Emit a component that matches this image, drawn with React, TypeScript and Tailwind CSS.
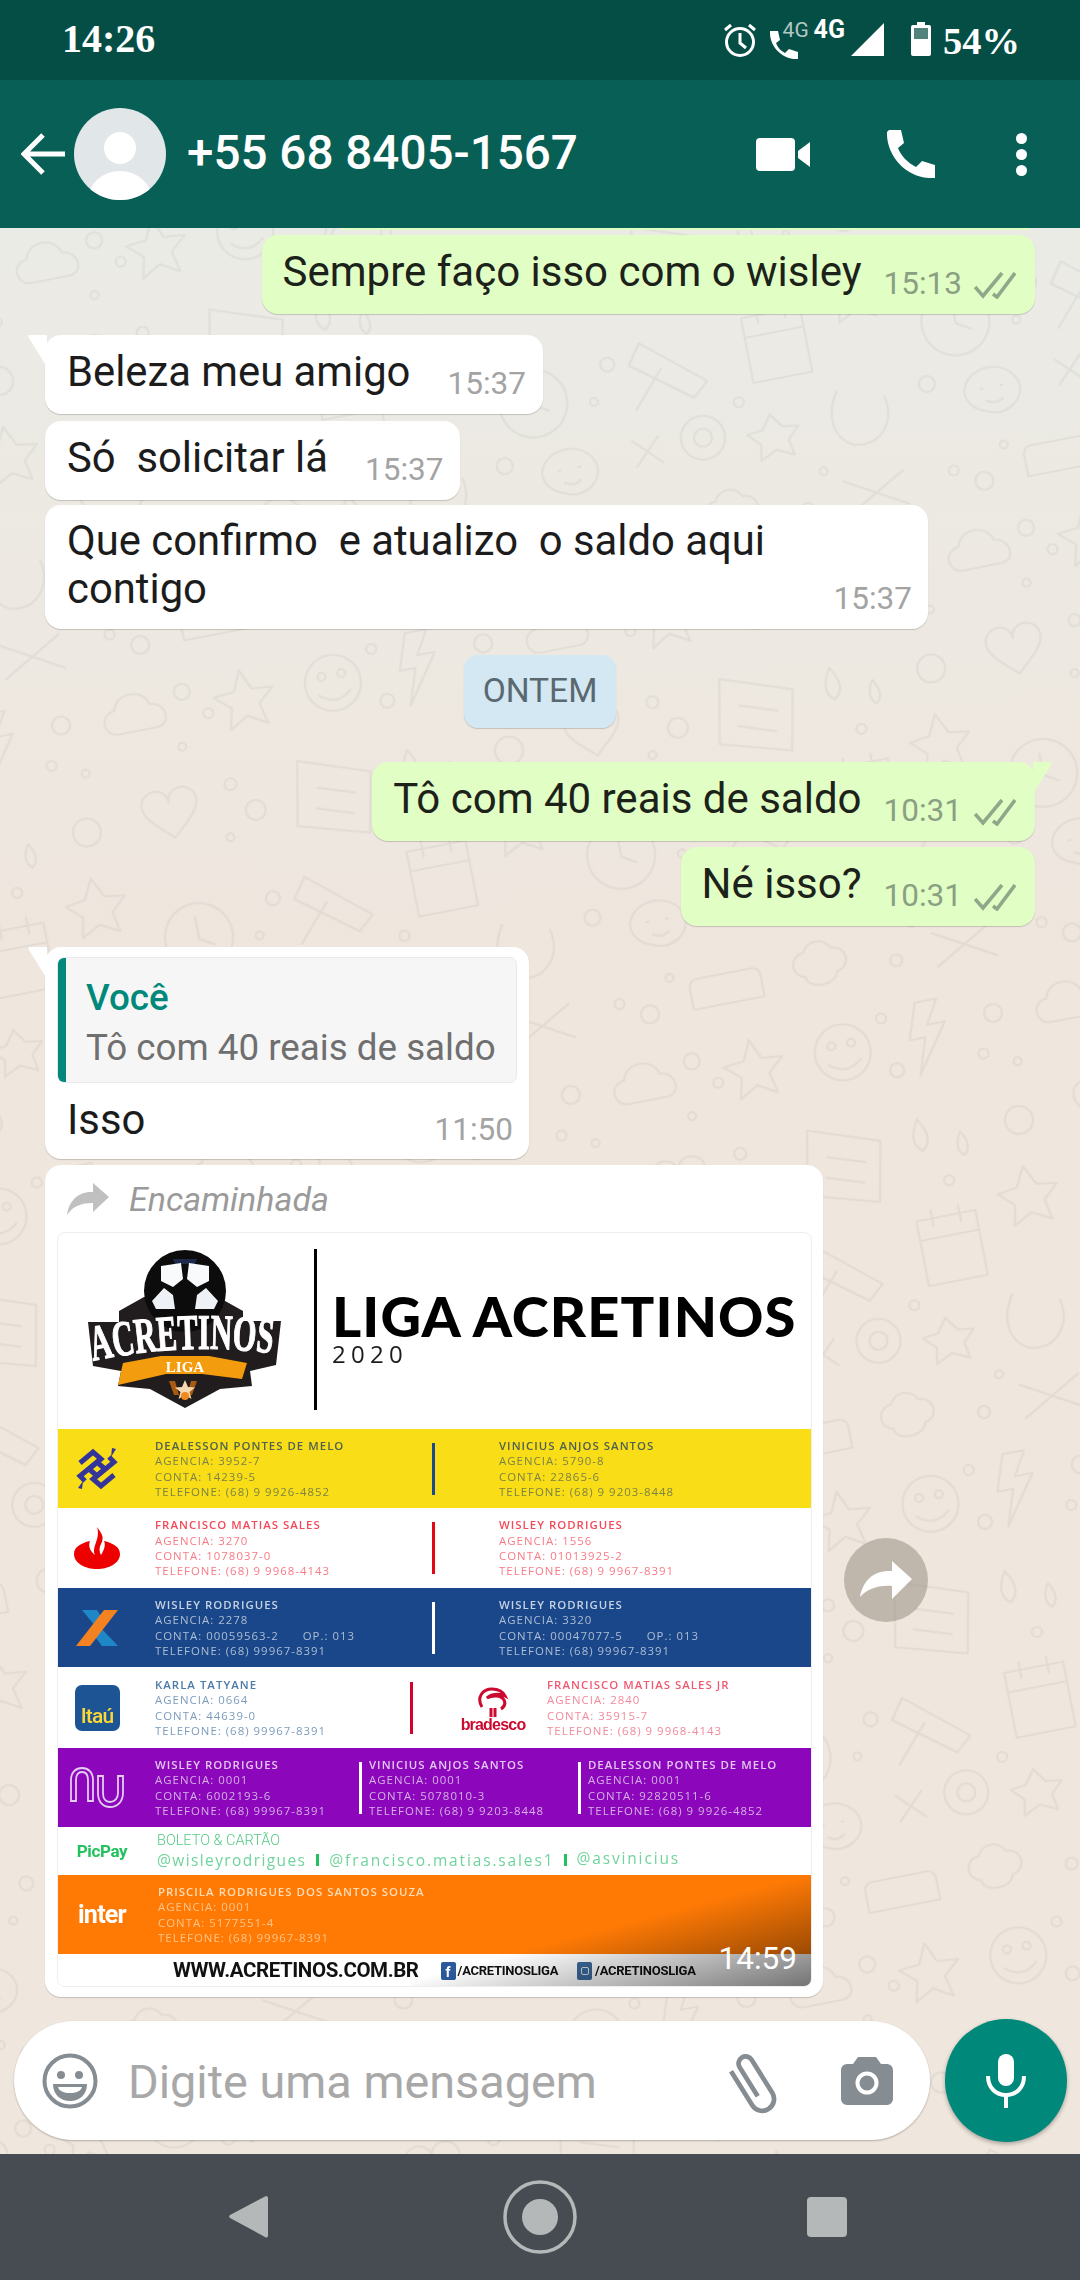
import type { ReactNode } from "react";

const roboto = { fontFamily: "Roboto, sans-serif" };

const Checks = () => (
  <svg width="42" height="27" viewBox="0 0 42 27" fill="none" stroke="#8fa88a" strokeWidth="3.6" className="ml-[12px] mb-[3px]">
    <path d="M1 15 9 24 28 1" />
    <path d="M19 22 23 25 41 1" />
  </svg>
);

const Wallpaper = () => (
  <svg className="absolute inset-0 h-full w-full" xmlns="http://www.w3.org/2000/svg">
    <defs>
      <pattern id="doodles" width="430" height="460" patternUnits="userSpaceOnUse" patternTransform="rotate(-11)">
        <g fill="none" stroke="#000" strokeOpacity="0.048" strokeWidth="2.2" strokeLinejoin="round" strokeLinecap="round">
          <path d="M20 60c-14 0-18-22 0-24 4-18 32-18 36 0 16 0 20 24 2 24z" />
          <circle cx="90" cy="30" r="8" />
          <circle cx="112" cy="56" r="5" />
          <circle cx="80" cy="84" r="4" />
          <path d="M150 20l9 20 21 2-16 14 5 21-19-11-19 11 5-21-16-14 21-2z" />
          <circle cx="240" cy="50" r="28" />
          <circle cx="230" cy="42" r="4" />
          <circle cx="250" cy="42" r="4" />
          <path d="M224 60q16 14 32 0" />
          <circle cx="284" cy="24" r="5" />
          <circle cx="290" cy="78" r="7" />
          <path d="M320 15l-12 36h16l-12 36 34-48h-18l14-24z" />
          <circle cx="395" cy="40" r="9" />
          <circle cx="378" cy="78" r="5" />
          <circle cx="410" cy="92" r="4" />
          <path d="M30 130c8-12 26-8 26 6 0-14 18-18 26-6 8 16-14 30-26 42-12-12-34-26-26-42z" />
          <circle cx="120" cy="130" r="6" />
          <circle cx="140" cy="160" r="10" />
          <circle cx="110" cy="182" r="4" />
          <path d="M190 120l70 24-12 60-70-20z" />
          <path d="M205 150l36 12M200 170l36 12" />
          <path d="M300 130q-14 22 0 32 14-10 0-32zM340 150q-10 16 0 24 10-8 0-24z" />
          <circle cx="400" cy="150" r="14" />
          <circle cx="320" cy="196" r="5" />
          <path d="M395 196l10 20 20 3-15 14 4 20-19-10-19 10 4-20-15-14 20-3z" />
          <path d="M60 240a34 34 0 1 0 .1 0zM60 254v22l14 8" />
          <circle cx="140" cy="250" r="7" />
          <circle cx="120" cy="284" r="4" />
          <path d="M175 235l60 50-16 14-58-44zM160 300l32-36" />
          <path d="M280 230h60v66h-60zM280 250h60M296 222v16M324 222v16" />
          <circle cx="20" cy="330" r="8" />
          <path d="M60 335c14-16 42-12 50 8 6 20-18 34-34 26-20-6-26-22-16-34zM72 345h2M92 345h2M76 358q8 6 16 0" />
          <path d="M150 330l26 26M150 356l26-26" />
          <circle cx="220" cy="340" r="22" />
          <circle cx="220" cy="340" r="9" />
          <circle cx="262" cy="312" r="5" />
          <path d="M290 330l10 14 16 2-12 12 3 16-17-8-17 8 3-16-12-12 16-2z" />
          <path d="M360 320c-14 20-14 46 8 56 26 6 44-16 38-42" />
          <circle cx="30" cy="420" r="5" />
          <circle cx="58" cy="436" r="9" />
          <circle cx="84" cy="404" r="4" />
          <path d="M110 410h56a8 8 0 0 1 8 8v22h-72v-22a8 8 0 0 1 8-8z" />
          <path d="M220 405c-14 0-18 20-2 24 0 14 30 14 32 0 16-2 14-24-2-24-6-12-22-12-28 0z" />
          <circle cx="310" cy="430" r="6" />
          <circle cx="332" cy="396" r="4" />
          <path d="M350 410l60 34M350 444l60-34" />
        </g>
      </pattern>
    </defs>
    <rect width="100%" height="100%" fill="url(#doodles)" />
  </svg>
);

const Tail = ({ side, color }: { side: "left" | "right"; color: string }) =>
  side === "left" ? (
    <svg width="20" height="32" viewBox="0 0 20 32" className="absolute -left-[18px] top-0">
      <path d="M20 0H3Q0 0 2 3L20 32Z" fill={color} />
    </svg>
  ) : (
    <svg width="20" height="32" viewBox="0 0 20 32" className="absolute -right-[18px] top-0">
      <path d="M0 0H17Q20 0 18 3L0 32Z" fill={color} />
    </svg>
  );

const Incoming = ({ text, time, tail, className }: { text: string; time: string; tail?: boolean; className: string }) => (
  <div className={`relative ml-[45px] flex w-fit items-end rounded-[16px] bg-white pl-[22px] pr-[17px] pt-[12px] pb-[12px] shadow-[0_1px_1px_rgba(0,0,0,0.18)] ${className}`}>
    {tail && <Tail side="left" color="#ffffff" />}
    <span className="mb-[5px] whitespace-pre text-[41.8px] leading-[50px] text-[#1c1c1c]">{text}</span>
    <span className="ml-[37px] text-[31.5px] leading-[36px] text-[#a3a3a3]">{time}</span>
  </div>
);

const Outgoing = ({ text, time, tail, className }: { text: string; time: string; tail?: boolean; className: string }) => (
  <div className={`relative ml-auto mr-[45px] flex w-fit items-end rounded-[16px] bg-[#e1fec5] pl-[21px] pr-[19px] pt-[12px] pb-[12px] shadow-[0_1px_1px_rgba(0,0,0,0.18)] ${className}`}>
    {tail && <Tail side="right" color="#e1fec5" />}
    <span className="mb-[5px] whitespace-pre text-[42px] leading-[50px] text-[#1c2219]">{text}</span>
    <span className="ml-[22px] text-[31.5px] leading-[36px] text-[#8b9f83]">{time}</span>
    <Checks />
  </div>
);

const Info = ({ lines, nameCls, cls, className }: { lines: string[]; nameCls: string; cls: string; className?: string }) => (
  <div className={`whitespace-pre text-[11.4px] leading-[15.4px] tracking-[0.09em] ${className ?? ""}`} style={{ fontFamily: "'Open Sans', sans-serif" }}>
    <div className={`font-semibold ${nameCls}`}>{lines[0]}</div>
    {lines.slice(1).map((l) => (
      <div key={l} className={cls}>
        {l}
      </div>
    ))}
  </div>
);

const Band = ({ className, logo, children }: { className: string; logo: ReactNode; children: ReactNode }) => (
  <div className={`flex items-center ${className}`}>
    <div className="flex w-[78px] shrink-0 items-center justify-center">{logo}</div>
    {children}
  </div>
);

const AcretinosLogo = () => (
  <svg width="240" height="180" viewBox="0 0 240 180" className="ml-[3px] mt-[8px] shrink-0">
    <defs>
      <path id="arch" d="M32 120 Q124 100 216 113" />
    </defs>
    <path d="M58 70l25-14h74l25 14v10l38 0-5 44-26 6 2 15-32 3-35 19-35-19-32-3 3-15-28-5-5-44 31 0z" fill="#211c1d" />
    <circle cx="124" cy="50" r="41" fill="#0c0c0c" />
    <path d="M112 18h24l-2 5h-20z" fill="#1d2a4a" />
    <path d="M100 25l20-3 2 16-10 8-12-6zM148 25l-20-3-2 16 10 8 12-6z" fill="#f8fafc" />
    <path d="M103 47l9 7 2 14-19 0-4-8zM145 47l-9 7-2 14 19 0 4-8z" fill="#eef1f5" />
    <text fill="#ffffff" stroke="#ffffff" strokeWidth="1.2" fontFamily="'Liberation Serif', serif" fontWeight="700" fontSize="50">
      <textPath href="#arch" textLength="180" lengthAdjust="spacingAndGlyphs">
        ACRETINOS
      </textPath>
    </text>
    <path d="M62 122l38-7h48l38 7-5 16-40-5h-36l-48 11z" fill="#f39c0d" />
    <text x="124" y="131" textAnchor="middle" fill="#ffffff" fontFamily="'Liberation Serif', serif" fontWeight="700" fontSize="15">
      LIGA
    </text>
    <path d="M108 140h6l4 14h-5zM136 140h-6l-4 14h5z" fill="#a85a10" />
    <path d="M124 139l3 7 7 .5-5.500 4.500 2 7-6.500-4-6.500 4 2-7-5.500-4.500 7-.5z" fill="#f6d9b0" />
    <circle cx="124" cy="155" r="4" fill="#ef8a1e" />
  </svg>
);

const BBLogo = () => (
  <svg width="42" height="42" viewBox="0 0 42 42">
    <g fill="none" stroke="#33359a" strokeWidth="5">
      <path d="M4 15 17 4l8 7-12 10 8 7 17-14-5-5" />
      <path d="M38 27 25 38l-8-7 12-10-8-7L4 28l5 5" />
    </g>
    <path d="M36 0l4 1-5 8zM6 41l-4-1 5-7z" fill="#33359a" />
  </svg>
);

const SantanderLogo = () => (
  <svg width="46" height="42" viewBox="0 0 46 42">
    <path d="M23 0c6 8 7 11 4 17-2 4-2 7 0 11 3-5 5-10 3-14 9 2 16 6 16 13 0 9-11 15-23 15S0 36 0 27c0-7 7-11 16-13-2 5 0 10 5 14-4-8 6-16 2-28z" fill="#ec0000" />
  </svg>
);

const CaixaLogo = () => (
  <svg width="42" height="36" viewBox="0 0 42 36">
    <path d="M6 0h15l7 11-8 6z" fill="#1f86c8" />
    <path d="M24 17l18 19H26l-9-12z" fill="#1f86c8" />
    <path d="M28 0h14L14 36H0z" fill="#f58220" />
  </svg>
);

const ItauLogo = () => (
  <div className="flex h-[46px] w-[45px] items-end justify-center rounded-[7px] bg-[#1c5494] pb-[3px] text-[21px] font-medium leading-[24px] tracking-[-0.04em] text-[#fdd835]">
    Itaú
  </div>
);

const BradescoLogo = () => (
  <div className="flex w-[56px] flex-col items-center text-[#cc092f]">
    <svg width="32" height="30" viewBox="0 0 32 30" fill="none" stroke="#cc092f" strokeWidth="3">
      <path d="M5 20C-1 10 6 2 15 2c6 0 11 3 13 7C22 6 13 7 10 11c5-3 14-3 17 2 2 4 0 7-3 9" />
      <path d="M14 21v9M18 21v9" />
    </svg>
    <span className="text-[16px] font-bold leading-[16px] tracking-[-0.05em]" style={{ fontFamily: "'Liberation Sans', sans-serif" }}>
      bradesco
    </span>
  </div>
);

const NuLogo = () => (
  <svg width="54" height="42" viewBox="0 0 54 42" fill="none" stroke="#e3cdf0" strokeWidth="1.8">
    <path d="M1 34V13C1 5 6 1 12 1s11 4 11 12v21h-5V13c0-5-2-8-6-8s-6 3-6 8v21z" />
    <path d="M28 9v17c0 9 5 14 12 14s13-5 13-14V9h-5v17c0 5-3 9-8 9s-7-4-7-9V9z" />
  </svg>
);

const App = () => {
  return (
    <div className="flex h-[2280px] w-[1080px] flex-col overflow-hidden bg-[#efe6dd]" style={roboto}>
      {/* status bar */}
      <div className="flex h-[80px] shrink-0 items-center bg-[#054e45] pl-[62px] pr-[60px] text-white">
        <span className="mb-[3px] text-[40px] font-bold leading-none" style={{ fontFamily: "'Liberation Serif', serif" }}>
          14:26
        </span>
        <div className="ml-auto flex items-start pt-[2px]">
          <svg width="34" height="36" viewBox="0 0 34 36" fill="none" stroke="#fff" strokeWidth="3" className="mt-[-1px]">
            <circle cx="17" cy="20" r="13.500" />
            <path d="M17 11v10l6 5" />
            <path d="M2 8l6-5M32 8l-6-5" />
          </svg>
          <div className="relative ml-[12px] h-[36px] w-[46px]">
            <svg width="30" height="30" viewBox="0 0 30 30" className="absolute left-0 top-[7px]">
              <path d="M1 1h8l2 9-4 3c2 5 5 8 9 10l4-4 9 3v7C13 30 0 16 1 1z" fill="#fff" />
            </svg>
            <span className="absolute left-[14px] top-[-7px] text-[21px] leading-[28px] text-white/70">4G</span>
          </div>
          <span className="ml-[-1px] mt-[-9px] text-[25px] font-bold leading-[32px]">4G</span>
          <svg width="33" height="33" viewBox="0 0 33 33" className="ml-[6px]">
            <path d="M33 0v33H0z" fill="#fff" />
          </svg>
          <svg width="20" height="34" viewBox="0 0 20 34" className="ml-[27px] mt-[-1px]">
            <path d="M6 0h8v3h4a2 2 0 0 1 2 2v27a2 2 0 0 1-2 2H2a2 2 0 0 1-2-2V5a2 2 0 0 1 2-2h4z" fill="#fff" />
            <path d="M3 6h14v11H3z" fill="#054e45" opacity="0.7" />
          </svg>
          <span className="ml-[12px] mt-[-1px] text-[38.5px] font-bold leading-[38px]" style={{ fontFamily: "'Liberation Serif', serif" }}>
            54%
          </span>
        </div>
      </div>

      {/* header */}
      <div className="relative z-20 flex h-[148px] shrink-0 items-center bg-[#085f55] text-white">
        <svg width="44" height="42" viewBox="0 0 44 42" fill="none" stroke="#fff" strokeWidth="5" className="ml-[21px]">
          <path d="M44 21H3M22 2 3 21l19 19" />
        </svg>
        <svg width="92" height="92" viewBox="0 0 92 92" className="ml-[9px]">
          <clipPath id="avatar">
            <circle cx="46" cy="46" r="46" />
          </clipPath>
          <g clipPath="url(#avatar)">
            <rect width="92" height="92" fill="#e1e6e9" />
            <circle cx="46" cy="40" r="16" fill="#fff" />
            <ellipse cx="46" cy="92" rx="32" ry="29" fill="#fff" />
          </g>
        </svg>
        <span className="ml-[21px] text-[47.6px] font-medium leading-none">+55 68 8405-1567</span>
        <svg width="54" height="33" viewBox="0 0 54 33" className="ml-auto">
          <rect width="39" height="33" rx="4" fill="#fff" />
          <path d="M42 13 54 4v25L42 20z" fill="#fff" />
        </svg>
        <svg width="48" height="48" viewBox="0 0 48 48" className="ml-[77px]">
          <path d="M2 0h12l3 13-6 5c3 8 10 15 18 19l6-6 13 4v13C20 50-1 26 0 2z" fill="#fff" />
        </svg>
        <div className="ml-[81px] mr-[53px] flex flex-col gap-[5px]">
          <div className="h-[11px] w-[11px] rounded-full bg-white" />
          <div className="h-[11px] w-[11px] rounded-full bg-white" />
          <div className="h-[11px] w-[11px] rounded-full bg-white" />
        </div>
      </div>

      {/* chat */}
      <div className="relative flex-1 overflow-hidden bg-linear-to-b from-[#ebebe6] to-[#efe6dd] to-40%">
        <Wallpaper />
        <div className="relative z-10 flex flex-col">
          <div className="ml-[340px] h-[2px] w-[690px] bg-[#e1fec5]" />
          <Outgoing text="Sempre faço isso com o wisley" time="15:13" className="mt-[5px]" />
          <Incoming text="Beleza meu amigo" time="15:37" tail className="mt-[21px]" />
          <Incoming text="Só  solicitar lá" time="15:37" className="mt-[7px]" />
          <div className="ml-[45px] mt-[5px] flex h-[124px] w-[883px] items-end justify-between rounded-[16px] bg-white pl-[22px] pr-[16px] pt-[11px] pb-[12px] shadow-[0_1px_1px_rgba(0,0,0,0.18)]">
            <span className="mb-[4px] whitespace-pre text-[41.8px] leading-[48px] text-[#1c1c1c]">
              {"Que confirmo  e atualizo  o saldo aqui\ncontigo"}
            </span>
            <span className="text-[31.5px] leading-[36px] text-[#a3a3a3]">15:37</span>
          </div>

          <div className="mx-auto mt-[26px] flex h-[73px] w-[152px] items-center justify-center rounded-[14px] bg-[#d4e8f3] text-[33.5px] text-[#5a6871] shadow-[0_1px_1px_rgba(0,0,0,0.18)]">
            ONTEM
          </div>

          <Outgoing text="Tô com 40 reais de saldo" time="10:31" tail className="mt-[34px]" />
          <Outgoing text="Né isso?" time="10:31" className="mt-[6px]" />

          <div className="relative ml-[45px] mt-[21px] h-[212px] w-[484px] rounded-[16px] bg-white px-[12px] pt-[10px] shadow-[0_1px_1px_rgba(0,0,0,0.18)]">
            <Tail side="left" color="#ffffff" />
            <div className="flex h-[126px] overflow-hidden rounded-[7px] border border-[#e9e9e9] bg-[#f6f6f6]">
              <div className="w-[8px] shrink-0 bg-[#00897b]" />
              <div className="pl-[20px] pt-[18px]">
                <div className="text-[36.750px] font-medium leading-[44px] text-[#00897b]">Você</div>
                <div className="mt-[6px] whitespace-pre text-[36.750px] leading-[44px] text-[#6f6f6f]">Tô com 40 reais de saldo</div>
              </div>
            </div>
            <div className="flex items-end justify-between pl-[10px] pr-[4px] pt-[12px]">
              <span className="mb-[3px] text-[41.8px] leading-[50px] text-[#1c1c1c]">Isso</span>
              <span className="text-[31.5px] leading-[36px] text-[#a3a3a3]">11:50</span>
            </div>
          </div>

          <div className="mt-[6px] flex items-center">
            <div className="ml-[45px] h-[832px] w-[778px] rounded-[16px] bg-white px-[12px] shadow-[0_1px_1px_rgba(0,0,0,0.18)]">
              <div className="flex h-[67px] items-center pl-[10px]">
                <svg width="42" height="32" viewBox="0 0 42 32">
                  <path d="M26 0l16 14-16 15v-9C14 20 6 23 0 32c2-14 11-24 26-23z" fill="#c0c0c0" />
                </svg>
                <span className="ml-[20px] text-[34px] italic leading-none text-[#9a9a9a]">Encaminhada</span>
              </div>

              {/* forwarded picture */}
              <div className="relative h-[755px] w-[755px] overflow-hidden rounded-[8px] border border-[#eeeeee] bg-white">
                <div className="blur-[0.4px]">
                  <div className="flex h-[196px] items-start">
                    <AcretinosLogo />
                    <div className="ml-[13px] mt-[16px] h-[161px] w-[3px] shrink-0 bg-black" />
                    <div className="ml-[15px] mt-[54px]">
                      <div className="whitespace-pre text-[56px] font-black leading-[58px] tracking-[0.02em] text-black" style={{ fontFamily: "Lato, sans-serif" }}>
                        LIGA ACRETINOS
                      </div>
                      <div className="mt-[-4px] text-[24px] leading-[26px] tracking-[0.22em] text-[#1c1c1c]" style={{ fontFamily: "'Open Sans', sans-serif" }}>
                        2020
                      </div>
                    </div>
                  </div>

                  <Band className="h-[79px] bg-[#f9dd17]" logo={<BBLogo />}>
                    <Info className="ml-[19px] w-[277px]" nameCls="text-[#4f6152]" cls="text-[#7b8247]" lines={["DEALESSON PONTES DE MELO", "AGENCIA: 3952-7", "CONTA: 14239-5", "TELEFONE: (68) 9 9926-4852"]} />
                    <div className="h-[52px] w-[3px] bg-[#1b4a8a]" />
                    <Info className="ml-[64px]" nameCls="text-[#4f6152]" cls="text-[#7b8247]" lines={["VINICIUS ANJOS SANTOS", "AGENCIA: 5790-8", "CONTA: 22865-6", "TELEFONE: (68) 9 9203-8448"]} />
                  </Band>
                  <Band className="h-[80px] bg-white" logo={<SantanderLogo />}>
                    <Info className="ml-[19px] w-[277px]" nameCls="text-[#f24a5a]" cls="text-[#f87a85]" lines={["FRANCISCO MATIAS SALES", "AGENCIA: 3270", "CONTA: 1078037-0", "TELEFONE: (68) 9 9968-4143"]} />
                    <div className="h-[52px] w-[3px] bg-[#e30613]" />
                    <Info className="ml-[64px]" nameCls="text-[#f24a5a]" cls="text-[#f87a85]" lines={["WISLEY RODRIGUES", "AGENCIA: 1556", "CONTA: 01013925-2", "TELEFONE: (68) 9 9967-8391"]} />
                  </Band>
                  <Band className="h-[79px] bg-[#1a4789]" logo={<CaixaLogo />}>
                    <Info className="ml-[19px] w-[277px]" nameCls="text-[#c6d2e2]" cls="text-[#adbdd3]" lines={["WISLEY RODRIGUES", "AGENCIA: 2278", "CONTA: 00059563-2      OP.: 013", "TELEFONE: (68) 99967-8391"]} />
                    <div className="h-[52px] w-[3px] bg-white" />
                    <Info className="ml-[64px]" nameCls="text-[#c6d2e2]" cls="text-[#adbdd3]" lines={["WISLEY RODRIGUES", "AGENCIA: 3320", "CONTA: 00047077-5      OP.: 013", "TELEFONE: (68) 99967-8391"]} />
                  </Band>
                  <Band className="h-[81px] bg-white" logo={<ItauLogo />}>
                    <Info className="ml-[19px] w-[255px]" nameCls="text-[#4d7ba8]" cls="text-[#7c9cbc]" lines={["KARLA TATYANE", "AGENCIA: 0664", "CONTA: 44639-0", "TELEFONE: (68) 99967-8391"]} />
                    <div className="h-[52px] w-[3px] bg-[#d5002b]" />
                    <div className="ml-[52px] mt-[4px]">
                      <BradescoLogo />
                    </div>
                    <Info className="ml-[26px]" nameCls="text-[#ef5a73]" cls="text-[#f28a9b]" lines={["FRANCISCO MATIAS SALES JR", "AGENCIA: 2840", "CONTA: 35915-7", "TELEFONE: (68) 9 9968-4143"]} />
                  </Band>
                  <Band className="h-[79px] bg-[#8c06bb]" logo={<NuLogo />}>
                    <Info className="ml-[19px] w-[204px]" nameCls="text-[#e2c7ee]" cls="text-[#d5b0e4]" lines={["WISLEY RODRIGUES", "AGENCIA: 0001", "CONTA: 6002193-6", "TELEFONE: (68) 99967-8391"]} />
                    <div className="h-[52px] w-[3px] bg-white" />
                    <Info className="ml-[7px] w-[209px]" nameCls="text-[#e2c7ee]" cls="text-[#d5b0e4]" lines={["VINICIUS ANJOS SANTOS", "AGENCIA: 0001", "CONTA: 5078010-3", "TELEFONE: (68) 9 9203-8448"]} />
                    <div className="h-[52px] w-[3px] bg-white" />
                    <Info className="ml-[7px]" nameCls="text-[#e2c7ee]" cls="text-[#d5b0e4]" lines={["DEALESSON PONTES DE MELO", "AGENCIA: 0001", "CONTA: 92820511-6", "TELEFONE: (68) 9 9926-4852"]} />
                  </Band>
                  <Band className="h-[48px] bg-white" logo={<span className="ml-[10px] text-[17px] font-bold leading-none tracking-[-0.02em] text-[#21c25e]">PicPay</span>}>
                    <div className="ml-[21px] text-[#55c985]" style={{ fontFamily: "'Open Sans', sans-serif" }}>
                      <div className="text-[14.5px] font-light leading-[18px]" style={{ fontFamily: "Roboto, sans-serif" }}>
                        BOLETO &amp; CARTÃO
                      </div>
                      <div className="flex items-center whitespace-pre text-[15.5px] leading-[20px] tracking-[0.09em] text-[#6fd49b]">
                        <span>@wisleyrodrigues</span>
                        <span className="ml-[10px] h-[12px] w-[3px] bg-[#21c25e]" />
                        <span className="ml-[10px] tracking-[0.12em]">@francisco.matias.sales1</span>
                        <span className="ml-[10px] h-[12px] w-[3px] bg-[#21c25e]" />
                        <span className="ml-[9px] mt-[-5px] tracking-[0.12em]">@asvinicius</span>
                      </div>
                    </div>
                  </Band>
                  <Band className="h-[79px] bg-[#ff7a05]" logo={<span className="ml-[10px] text-[25px] font-bold leading-none tracking-[-0.03em] text-white">inter</span>}>
                    <Info className="ml-[22px]" nameCls="text-[#ffdcb5]" cls="text-[#ffc48a]" lines={["PRISCILA RODRIGUES DOS SANTOS SOUZA", "AGENCIA: 0001", "CONTA: 5177551-4", "TELEFONE: (68) 99967-8391"]} />
                  </Band>
                  <div className="flex h-[33px] items-center whitespace-pre bg-white pl-[115px] font-bold text-[#111111]">
                    <span className="text-[20.5px] leading-none tracking-[-0.02em]">WWW.ACRETINOS.COM.BR</span>
                    <span className="ml-[22px] flex h-[18px] w-[15px] items-end justify-center rounded-[2px] bg-[#2a5a9c] text-[14px] leading-[16px] text-white">f</span>
                    <span className="ml-[2px] text-[13px] leading-none tracking-[-0.02em]">/ACRETINOSLIGA</span>
                    <span className="ml-[19px] flex h-[18px] w-[15px] items-center justify-center rounded-[2px] bg-[#3d6a9c]">
                      <span className="h-[8px] w-[8px] rounded-[2px] border border-white/80" />
                    </span>
                    <span className="ml-[3px] text-[13px] leading-none tracking-[-0.02em]">/ACRETINOSLIGA</span>
                  </div>
                </div>
                <div className="absolute bottom-0 right-0 h-[110px] w-[400px] bg-[linear-gradient(165deg,transparent_48%,rgba(0,0,0,0.55))]" />
                <span className="absolute bottom-[9px] right-[14px] text-[31.5px] leading-[36px] text-white">14:59</span>
              </div>
            </div>
            <div className="ml-[21px] mb-[3px] flex h-[84px] w-[84px] items-center justify-center rounded-full bg-[#8f887c]/50">
              <svg width="52" height="38" viewBox="0 0 52 38">
                <path d="M32 0l20 18-20 20V25C17 24 8 28 0 36 3 19 14 9 32 10z" fill="#fff" />
              </svg>
            </div>
          </div>

          {/* composer */}
          <div className="mt-[22px] flex items-center pl-[14px]">
            <div className="flex h-[119px] w-[916px] items-center rounded-full bg-white shadow-[0_1px_2px_rgba(0,0,0,0.25)]">
              <svg width="56" height="56" viewBox="0 0 56 56" className="ml-[28px]">
                <circle cx="28" cy="28" r="25.500" fill="none" stroke="#858d93" strokeWidth="4" />
                <circle cx="19" cy="22" r="4" fill="#858d93" />
                <circle cx="37" cy="22" r="4" fill="#858d93" />
                <path d="M11 31h34c0 11-8 17-17 17S11 42 11 31z" fill="#858d93" />
                <path d="M16 34h24c-1 4-6 6-12 6s-11-2-12-6z" fill="#fff" />
              </svg>
              <span className="ml-[30px] mt-[4px] whitespace-pre text-[46.8px] leading-none text-[#a8a8a8]">Digite uma mensagem</span>
              <svg width="70" height="66" viewBox="0 0 58 56" fill="none" stroke="#858d93" strokeWidth="4" className="ml-auto">
                <path d="M27 42V13a6 6 0 0 1 12 0v33a10 10 0 0 1-20 0V12" transform="rotate(-32 29 28)" />
              </svg>
              <svg width="52" height="48" viewBox="0 0 52 48" className="ml-[55px] mr-[37px]">
                <path d="M17 0h18l5 7h6a6 6 0 0 1 6 6v29a6 6 0 0 1-6 6H6a6 6 0 0 1-6-6V13a6 6 0 0 1 6-6h6z" fill="#858d93" />
                <circle cx="26" cy="26" r="9.500" fill="none" stroke="#fff" strokeWidth="4" />
              </svg>
            </div>
            <div className="ml-[15px] flex h-[123px] w-[122px] items-center justify-center rounded-full bg-[#00897b] shadow-[0_2px_4px_rgba(0,0,0,0.3)]">
              <svg width="40" height="54" viewBox="0 0 40 54">
                <rect x="12" y="0" width="16" height="32" rx="8" fill="#fff" />
                <path d="M2 22c0 12 8 19 18 19s18-7 18-19" fill="none" stroke="#fff" strokeWidth="4" />
                <rect x="18" y="40" width="4" height="14" fill="#fff" />
              </svg>
            </div>
          </div>
        </div>
      </div>

      {/* nav bar */}
      <div className="flex h-[126px] shrink-0 items-center bg-[#464c52]">
        <svg width="40" height="44" viewBox="0 0 40 44" className="ml-[229px]">
          <path d="M37 1a2 2 0 0 1 2 2v38a2 2 0 0 1-3 1L1 23a2 2 0 0 1 0-3z" fill="#b4b8b8" />
        </svg>
        <svg width="74" height="74" viewBox="0 0 74 74" className="ml-[234px]">
          <circle cx="37" cy="37" r="35" fill="none" stroke="#b4b8b8" strokeWidth="3.500" />
          <circle cx="37" cy="37" r="18" fill="#b4b8b8" />
        </svg>
        <div className="ml-[230px] h-[40px] w-[40px] rounded-[4px] bg-[#b4b8b8]" />
      </div>
    </div>
  );
};

export default App;
